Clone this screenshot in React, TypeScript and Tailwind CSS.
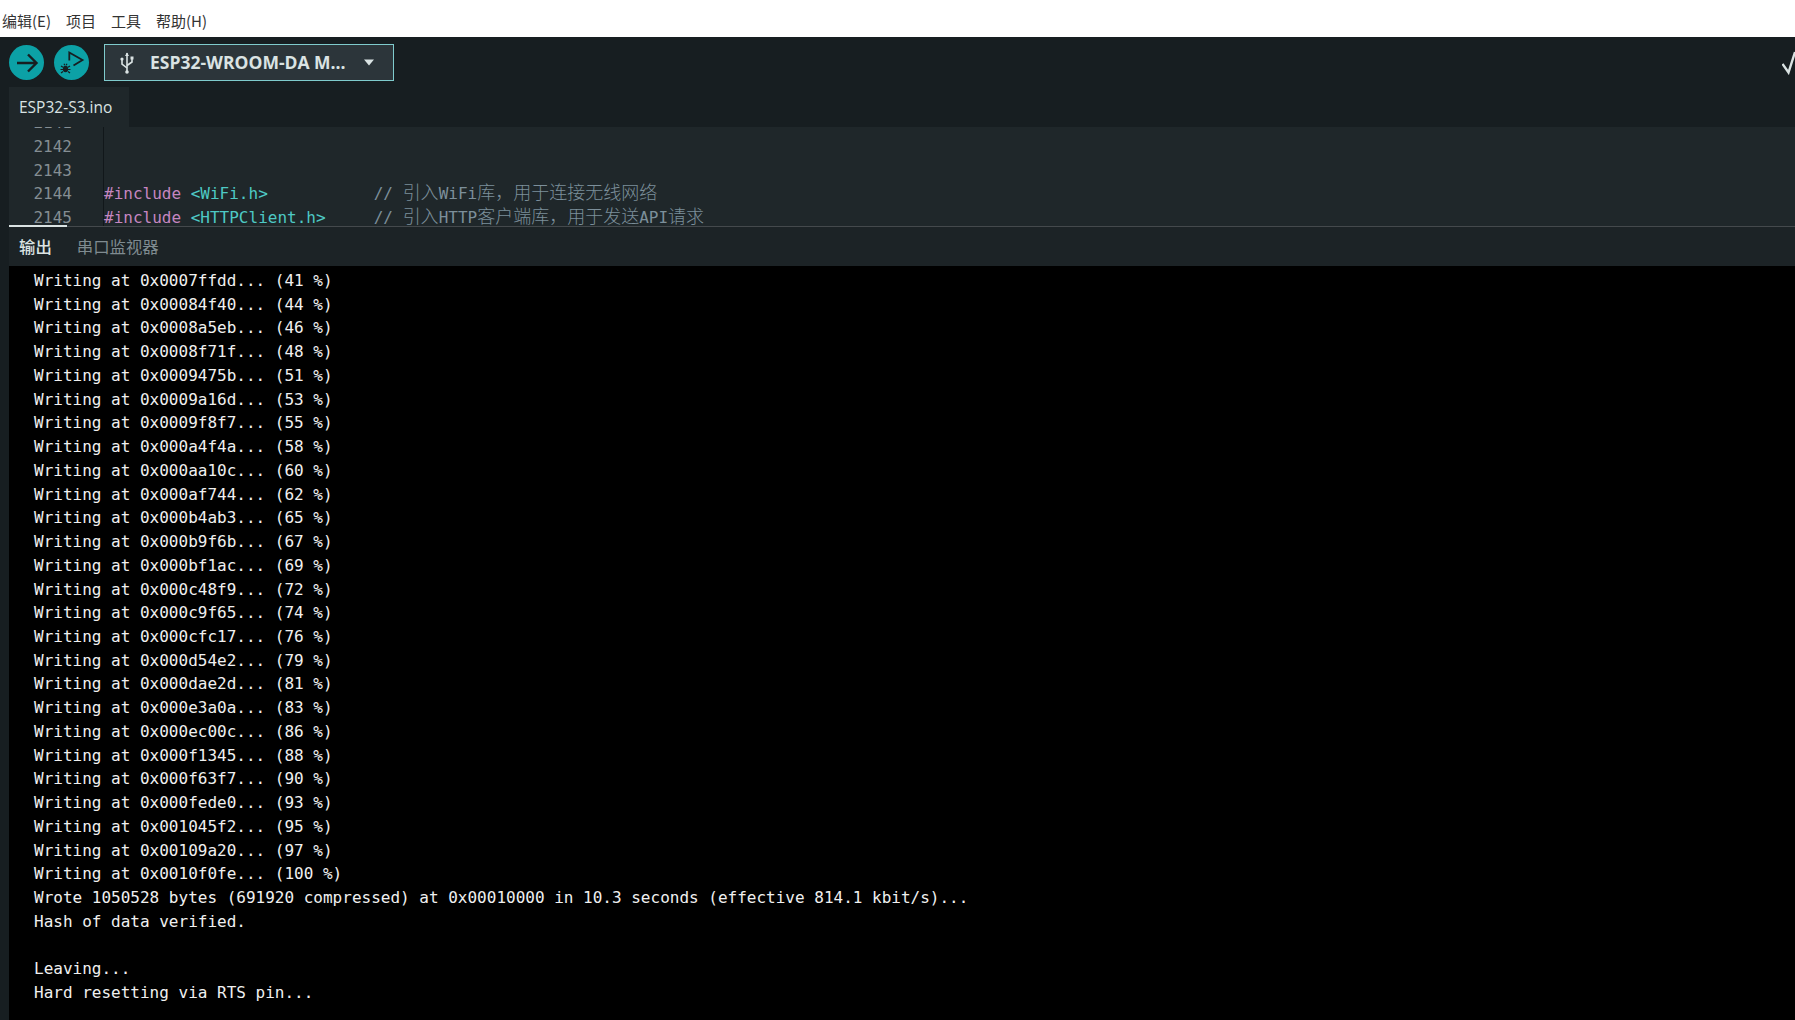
const mono = "font-['DejaVu_Sans_Mono','Noto_Sans_CJK_SC',monospace]";

const writes: [string, number][] = [
  ["0007ffdd", 41], ["00084f40", 44], ["0008a5eb", 46], ["0008f71f", 48], ["0009475b", 51],
  ["0009a16d", 53], ["0009f8f7", 55], ["000a4f4a", 58], ["000aa10c", 60], ["000af744", 62],
  ["000b4ab3", 65], ["000b9f6b", 67], ["000bf1ac", 69], ["000c48f9", 72], ["000c9f65", 74],
  ["000cfc17", 76], ["000d54e2", 79], ["000dae2d", 81], ["000e3a0a", 83], ["000ec00c", 86],
  ["000f1345", 88], ["000f63f7", 90], ["000fede0", 93], ["001045f2", 95], ["00109a20", 97],
  ["0010f0fe", 100],
];

const lines = [
  ...writes.map(([a, p]) => `Writing at 0x${a}... (${p} %)`),
  "Wrote 1050528 bytes (691920 compressed) at 0x00010000 in 10.3 seconds (effective 814.1 kbit/s)...",
  "Hash of data verified.",
  "",
  "Leaving...",
  "Hard resetting via RTS pin...",
];

function Cjk({ children }: { children: string }) {
  return <span className="font-['Noto_Sans_CJK_SC',sans-serif] text-[18px] leading-none font-light">{children}</span>;
}

export default function App() {
  return (
    <div className="flex h-[1020px] w-[1795px] flex-col overflow-hidden bg-[#171e21]">
      <div className="flex h-[37px] items-center gap-[15px] bg-white pl-[2px] pt-[5px] font-['Noto_Sans_CJK_SC',sans-serif] text-[15px] text-[#333]">
        <span>编辑(E)</span>
        <span>项目</span>
        <span>工具</span>
        <span>帮助(H)</span>
      </div>

      <div className="flex h-[50px] items-center pl-[9px] pt-[1px]">
        <div className="flex h-[35px] w-[35px] items-center justify-center rounded-full bg-[#0ca1a6]">
          <svg width="24" height="24" viewBox="0 0 24 24" fill="none" stroke="#171e21" strokeWidth="2.4">
            <path d="M2 12H21M13 3.5L21.5 12L13 20.5" />
          </svg>
        </div>
        <div className="ml-[10px] flex h-[35px] w-[35px] items-center justify-center rounded-full bg-[#0ca1a6]">
          <svg width="35" height="35" viewBox="0 0 35 35" fill="none" stroke="#171e21" strokeWidth="1.8">
            <path d="M15.3 15.5V7.5L28.5 15L19.5 20.5" />
            <ellipse cx="11.5" cy="24" rx="2.6" ry="3.2" fill="#171e21" stroke="none" />
            <path d="M10 18.8L10.8 20.2M13 18.8L12.2 20.2" strokeWidth="1.2" />
            <path d="M7 21L9 22.3M16 21L14 22.3M6.5 24.5H9M16.5 24.5H14M7 28L9 26.5M16 28L14 26.5" strokeWidth="1.2" />
          </svg>
        </div>
        <div className="ml-[15px] flex h-[37px] w-[290px] items-center border border-[#7fcbcd] bg-[#2c353a] pl-[13px]">
          <svg width="18" height="24" viewBox="0 0 18 24" fill="none" stroke="#dae3e3" strokeWidth="1.6">
            <path d="M9 2V22" />
            <path d="M9 17L4 13V9M9 14.5L14 11V8" />
            <circle cx="4" cy="8" r="1.6" fill="#dae3e3" stroke="none" />
            <rect x="12.5" y="5.5" width="3" height="3" fill="#dae3e3" stroke="none" />
            <path d="M7 5L9 1.5L11 5Z" fill="#dae3e3" stroke="none" />
            <circle cx="9" cy="21" r="1.8" fill="#dae3e3" stroke="none" />
          </svg>
          <span className="ml-[14px] font-['Open_Sans',sans-serif] text-[17.5px] font-bold text-[#dae3e3]">ESP32-WROOM-DA M...</span>
          <svg className="ml-[17px]" width="12" height="7" viewBox="0 0 12 7" fill="#dae3e3">
            <path d="M1 0.5H11L6 6.5Z" />
          </svg>
        </div>
        <div className="ml-auto w-[13px] overflow-hidden">
          <svg width="13" height="24" viewBox="0 0 13 24" fill="none" stroke="#dae3e3" strokeWidth="2.4">
            <path d="M0.5 13L6.5 21.5L13 1" />
          </svg>
        </div>
      </div>

      <div className="h-[40px] pl-[9px]">
        <div className="flex h-full w-[120px] items-center bg-[#1f272a] pl-[10px] pt-[2px] font-['Open_Sans',sans-serif] text-[15.5px] text-[#dae3e3]">
          ESP32-S3.ino
        </div>
      </div>

      <div className="ml-[9px] h-[99px] overflow-hidden bg-[#1f272a]">
        <div className={`-mt-[16px] flex text-[16px] leading-[23.75px] ${mono}`}>
          <div className="w-[63px] shrink-0 text-right text-[#858e93]">
            <div>2141</div>
            <div>2142</div>
            <div>2143</div>
            <div>2144</div>
            <div>2145</div>
          </div>
          <div className="ml-[31px] w-px shrink-0 bg-[#11171a]" />
          <div className="whitespace-pre">
            <div>&nbsp;</div>
            <div>&nbsp;</div>
            <div>&nbsp;</div>
            <div>
              <span className="text-[#c586c0]">#include</span>
              <span className="text-[#4ec9c5]"> &lt;WiFi.h&gt;</span>
              <span className="text-[#7c8f9a]">
                {"           // "}
                <Cjk>引入</Cjk>WiFi<Cjk>库，用于连接无线网络</Cjk>
              </span>
            </div>
            <div>
              <span className="text-[#c586c0]">#include</span>
              <span className="text-[#4ec9c5]"> &lt;HTTPClient.h&gt;</span>
              <span className="text-[#7c8f9a]">
                {"     // "}
                <Cjk>引入</Cjk>HTTP<Cjk>客户端库，用于发送</Cjk>API<Cjk>请求</Cjk>
              </span>
            </div>
          </div>
        </div>
      </div>

      <div className="ml-[9px] h-px bg-[#44494c]">
        <div className="h-[2px] w-[58px] -translate-y-px bg-[#dae3e3]" />
      </div>

      <div className="ml-[9px] flex h-[39px] items-center gap-[25px] bg-[#1c2326] pl-[10px] font-['Noto_Sans_CJK_SC',sans-serif] text-[16.4px]">
        <span className="font-medium text-[#dae3e3]">输出</span>
        <span className="text-[#7f8b90]">串口监视器</span>
      </div>

      <div className={`ml-[9px] min-h-0 flex-1 whitespace-pre bg-black pl-[25px] pt-[3px] text-[16px] leading-[23.74px] text-[#f0f0f0] ${mono}`}>
        {lines.map((l, i) => (
          <div key={i}>{l || "\u00a0"}</div>
        ))}
      </div>
    </div>
  );
}
